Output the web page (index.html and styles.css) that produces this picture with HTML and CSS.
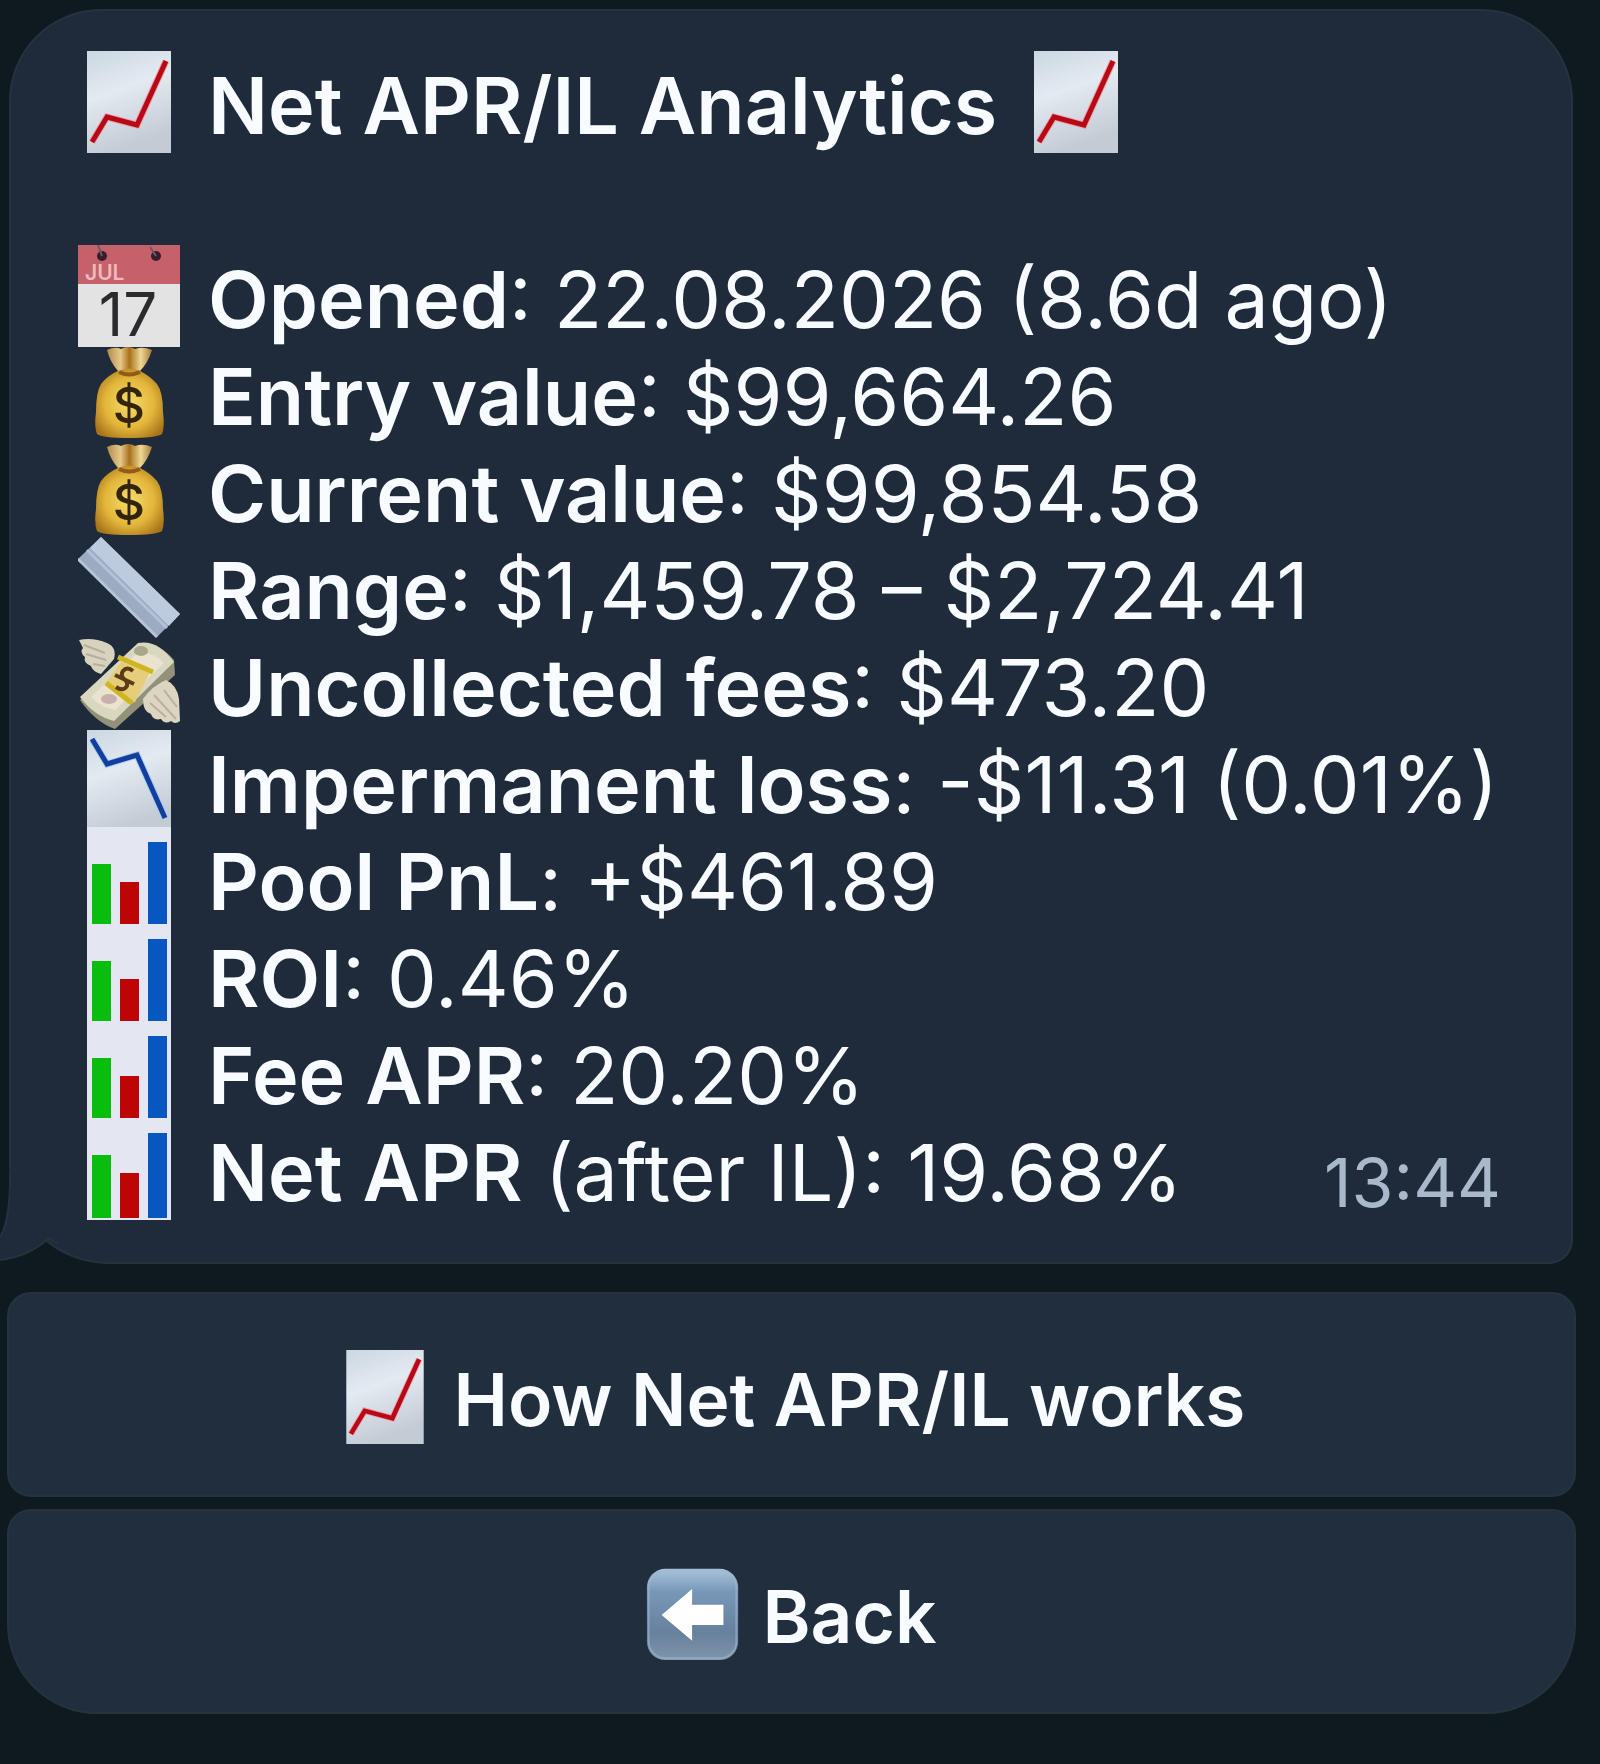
FILE: index.html
```html
<!DOCTYPE html>
<html lang="en">
<head>
  <meta charset="UTF-8">
  <meta name="viewport" content="width=device-width, initial-scale=1.0">
  <title>Net APR/IL Analytics</title>
  <link rel="stylesheet" href="styles.css">
</head>
<body>
  <!-- shared icons -->
  <svg class="sprite" aria-hidden="true">
    <defs>
      <linearGradient id="paper" x1="0" y1="0" x2="0.3" y2="1">
        <stop offset="0" stop-color="#ccd7e2"/>
        <stop offset="0.45" stop-color="#e3eaf1"/>
        <stop offset="1" stop-color="#c3cbd5"/>
      </linearGradient>
      <radialGradient id="gold" cx="0.5" cy="0.5" r="0.6">
        <stop offset="0" stop-color="#f6dc6a"/>
        <stop offset="0.6" stop-color="#e2b63a"/>
        <stop offset="1" stop-color="#a8741a"/>
      </radialGradient>
      <linearGradient id="neck" x1="0" y1="0" x2="1" y2="0">
        <stop offset="0" stop-color="#b08a4c"/>
        <stop offset="0.3" stop-color="#e6c98a"/>
        <stop offset="0.5" stop-color="#a8701c"/>
        <stop offset="0.75" stop-color="#efd795"/>
        <stop offset="1" stop-color="#a47a38"/>
      </linearGradient>
      <linearGradient id="tile" x1="0" y1="0" x2="0" y2="1">
        <stop offset="0" stop-color="#a9c4dc"/>
        <stop offset="0.25" stop-color="#7897b8"/>
        <stop offset="0.7" stop-color="#67809d"/>
        <stop offset="1" stop-color="#8095ab"/>
      </linearGradient>
      <symbol id="chart-up" viewBox="0 0 102 102">
        <rect x="9" y="0" width="84" height="102" fill="url(#paper)"/>
        <path d="M14 91 L29 66 L59 74 L88 10" fill="none" stroke="#eaa5b0" stroke-width="7"/>
        <path d="M14 91 L29 66 L59 74 L88 10" fill="none" stroke="#b80a16" stroke-width="5"/>
      </symbol>
      <symbol id="chart-down" viewBox="0 0 102 102">
        <rect x="9" y="0" width="84" height="102" fill="url(#paper)"/>
        <path d="M14 9 L29 34 L59 25 L87 88" fill="none" stroke="#a9cbf0" stroke-width="7"/>
        <path d="M14 9 L29 34 L59 25 L87 88" fill="none" stroke="#123f9e" stroke-width="5"/>
      </symbol>
      <symbol id="bars" viewBox="0 0 102 102">
        <rect x="9" y="0" width="84" height="102" fill="#e4e7f2"/>
        <rect x="14" y="37" width="19" height="63" fill="#08bd0e"/>
        <rect x="42" y="55" width="19" height="45" fill="#bd0505"/>
        <rect x="70" y="15" width="19" height="85" fill="#0757c0"/>
      </symbol>
      <symbol id="calendar" viewBox="0 0 102 102">
        <rect width="102" height="102" fill="#e3e3e4"/>
        <rect width="102" height="39" fill="#c4616a"/>
        <circle cx="24" cy="11" r="5" fill="#3b1c2b"/>
        <circle cx="78" cy="11" r="5" fill="#3b1c2b"/>
        <path d="M24 11 L20 0 M78 11 L72 2" stroke="#6d5a66" stroke-width="2"/>
        <text class="cal-month" x="7" y="35">JUL</text>
        <text class="cal-day" x="50" y="91" text-anchor="middle">17</text>
      </symbol>
      <symbol id="money-bag" viewBox="0 -4 102 102">
        <path d="M29 4 Q37 0 43 3 Q50 -1 57 3 Q65 0 74 4 Q70 17 62 25 L65 33 H38 L40 25 Q32 16 29 4 Z" fill="url(#neck)"/>
        <path d="M40 25 Q51 20 62 25 Q72 30 79 38 Q85 46 85 66 Q87 80 84 88 Q78 92 51 92 Q24 92 19 88 Q16 80 18 66 Q18 46 23 38 Q30 29 40 25 Z" fill="url(#gold)"/>
        <path d="M41 26 Q51 31 62 26" fill="none" stroke="#93591a" stroke-width="4"/>
        <text class="bag-sign" x="51" y="77" text-anchor="middle">$</text>
      </symbol>
      <symbol id="ruler" viewBox="0 -2 102 102">
        <path d="M0 21 L23 -1 L102 76 L79 99 Z" fill="#9cabc1"/>
        <path d="M12 10 L23 -1 L102 76 L91 88 Z" fill="#bccbdd"/>
        <path d="M9 12 L89 90" stroke="#b3c2d6" stroke-width="3"/>
        <path d="M0 21 L79 99" stroke="#b7c5d8" stroke-width="3"/>
      </symbol>
      <symbol id="money-wings" viewBox="0 -4 102 102">
        <path d="M2 63 L61 8 Q76 1 96 23 L97 38 L37 92 Q17 85 2 63 Z" fill="#93917a"/>
        <path d="M2 60 L60 6 Q79 2 96 25 L36 84 Q16 79 2 60 Z" fill="#d9d7bd"/>
        <path d="M13 60 L59 16 Q75 14 86 26 L37 73 Q23 71 13 60 Z" fill="#e9e3cf"/>
        <ellipse cx="63" cy="14" rx="7" ry="5" fill="#a9a78b"/>
        <ellipse cx="31" cy="62" rx="8" ry="5" fill="#c9b0ac"/>
        <path d="M28 46 L43 25 L73 33 L57 65 L49 67 Z" fill="#e5cd7c"/>
        <path d="M40 20 L75 35 M28 46 L54 66" stroke="#cfb51e" stroke-width="5"/>
        <path d="M38 50 Q45 55 49 49 Q50 45 46 42 Q42 38 45 34 Q49 29 55 34 M37 38 L56 47" fill="none" stroke="#5b3b18" stroke-width="4"/>
        <path d="M1 3 Q15 0 29 6 Q39 10 36 22 L23 37 Q14 34 13 29 Q5 26 7 20 Q1 15 5 11 Z" fill="#d8d3bf"/>
        <path d="M6 8 L27 16 M8 17 L28 23 M15 27 L27 29" stroke="#b5b09d" stroke-width="2"/>
        <path d="M65 62 Q74 49 88 43 Q99 48 101 62 L102 84 Q97 88 93 84 Q87 88 83 82 Q75 84 73 77 Q65 75 65 62 Z" fill="#dcd5c2"/>
        <path d="M76 58 L98 82 M72 66 L88 80 M86 53 L99 70" stroke="#b9b19f" stroke-width="2"/>
      </symbol>
      <symbol id="arrow-left" viewBox="0 0 102 102">
        <rect x="1" y="2" width="99" height="99" rx="20" fill="url(#tile)"/>
        <rect x="3" y="4" width="95" height="95" rx="18" fill="none" stroke="#9fb8cf" stroke-width="2" opacity="0.6"/>
        <path d="M17 52 L50 24 V41 H84 V63 H50 V80 Z" fill="#fff"/>
      </symbol>
    </defs>
  </svg>

  <main class="chat">
    <article class="bubble">
      <h1 class="title">
        <svg class="icon"><use href="#chart-up"/></svg>
        <span>Net APR/IL Analytics</span>
        <svg class="icon"><use href="#chart-up"/></svg>
      </h1>
      <ul class="stats">
        <li><svg class="icon"><use href="#calendar"/></svg><span><b>Opened</b>: 22.08.2026 (8.6d ago)</span></li>
        <li><svg class="icon"><use href="#money-bag"/></svg><span><b>Entry value</b>: $99,664.26</span></li>
        <li><svg class="icon"><use href="#money-bag"/></svg><span><b>Current value</b>: $99,854.58</span></li>
        <li><svg class="icon"><use href="#ruler"/></svg><span><b>Range</b>: $1,459.78 – $2,724.41</span></li>
        <li><svg class="icon"><use href="#money-wings"/></svg><span><b>Uncollected fees</b>: $473.20</span></li>
        <li><svg class="icon"><use href="#chart-down"/></svg><span><b>Impermanent loss</b>: -$11.31 (0.01%)</span></li>
        <li><svg class="icon"><use href="#bars"/></svg><span><b>Pool PnL</b>: +$461.89</span></li>
        <li><svg class="icon"><use href="#bars"/></svg><span><b>ROI</b>: 0.46%</span></li>
        <li><svg class="icon"><use href="#bars"/></svg><span><b>Fee APR</b>: 20.20%</span></li>
        <li><svg class="icon"><use href="#bars"/></svg><span><b>Net APR</b> (after IL): 19.68%</span><time class="time">13:44</time></li>
      </ul>
      <svg class="tail" viewBox="0 0 60 90" aria-hidden="true">
        <path class="tail-fill" d="M11 0 V12 Q9 50 0 64 V87 Q28 84 49 65 L60 50 V0 Z"/>
        <path class="tail-line" d="M10 0 V12 Q9 50 0 64 M0 87 Q28 84 49 65 L58 71"/>
      </svg>
    </article>

    <div class="keyboard">
      <button type="button" class="key">
        <svg class="icon"><use href="#chart-up"/></svg>
        <span>How Net APR/IL works</span>
      </button>
      <button type="button" class="key">
        <svg class="icon"><use href="#arrow-left"/></svg>
        <span>Back</span>
      </button>
    </div>
  </main>
</body>
</html>
```
FILE: styles.css
```css
* {
  box-sizing: border-box;
}
body {
  margin: 0;
  background-color: #0f1a20;
  color: #f8fbff;
  font-family: Inter, "Liberation Sans", sans-serif;
}
.sprite {
  position: absolute;
  width: 0;
  height: 0;
}
.chat {
  padding: 9px 24px 48px 7px;
}
.bubble {
  position: relative;
  margin: 0 3px 28px 2px;
  padding: 46px 70px 41px 67px;
  background-color: #1f2b3a;
  border: 2px solid #26333f;
  border-radius: 92px 92px 24px 100px;
  font-size: 79px;
  line-height: 97px;
}
.title {
  display: flex;
  gap: 28px;
  margin: 0 0 97px;
  font-size: 79px;
  font-weight: 600;
}
.stats {
  margin: 0;
  padding: 0;
  list-style: none;
}
.stats li {
  display: flex;
  gap: 28px;
  height: 97px;
  white-space: nowrap;
}
.stats b {
  font-weight: 600;
}
.icon {
  flex: none;
  width: 102px;
  height: 102px;
  margin-top: -6px;
}
.time {
  margin-left: auto;
  padding-top: 10px;
  color: #a9b9cb;
  font-size: 68px;
}
.tail {
  position: absolute;
  left: -11px;
  bottom: -1px;
  width: 60px;
  height: 90px;
}
.tail-fill {
  fill: #1f2b3a;
}
.tail-line {
  fill: none;
  stroke: #26333f;
  stroke-width: 2;
}
.keyboard {
  display: flex;
  flex-direction: column;
  gap: 12px;
}
.key {
  display: flex;
  justify-content: center;
  align-items: center;
  gap: 22px;
  height: 205px;
  padding: 10px 0 0;
  background-color: #202e3e;
  border: 2px solid #25333f;
  border-radius: 24px;
  color: inherit;
  font-family: inherit;
  font-size: 73px;
  font-weight: 600;
  cursor: pointer;
}
.key:last-child {
  border-radius: 24px 24px 90px 90px;
}
.key .icon {
  width: 94px;
  height: 94px;
}
.cal-month {
  fill: #f0b9ba;
  font-size: 21px;
  font-weight: 600;
}
.cal-day {
  fill: #2b2b2d;
  font-size: 60px;
}
.bag-sign {
  fill: #33240f;
  font-size: 50px;
  font-weight: 500;
}
```
